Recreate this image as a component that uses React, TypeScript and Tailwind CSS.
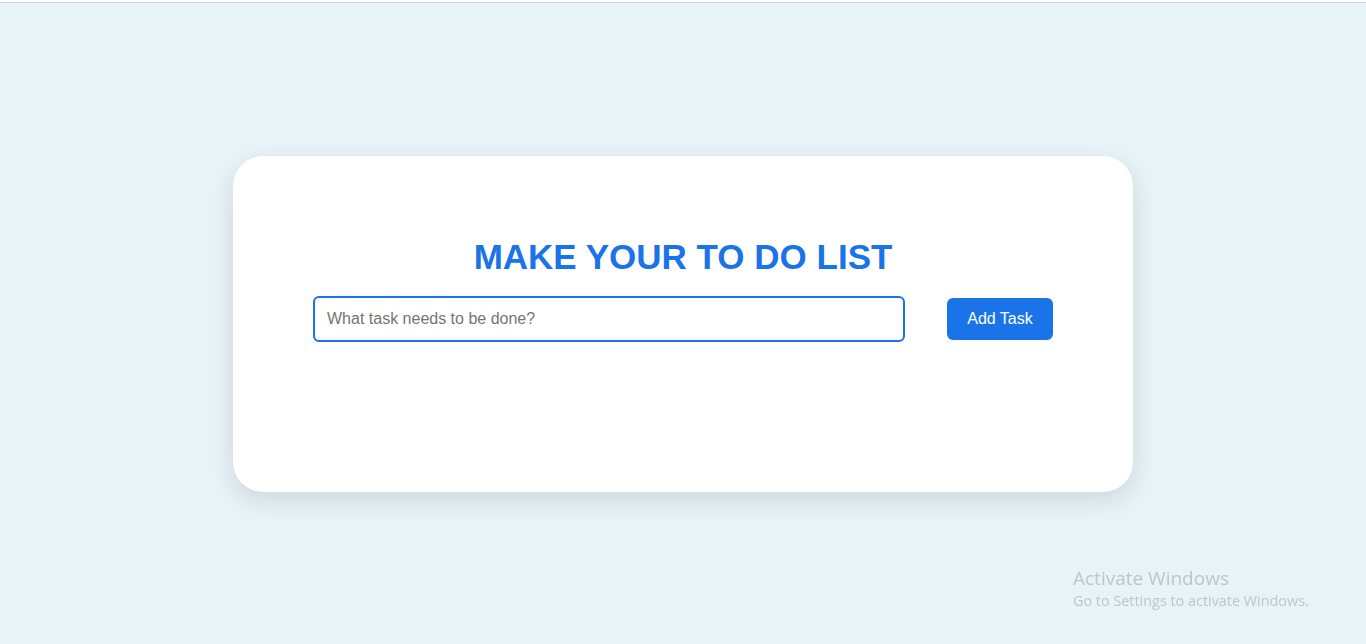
export default function App() {
  return (
    <div className="min-h-screen bg-[#e8f3f8] flex flex-col font-['Liberation_Sans',Arial,sans-serif]">
      <div className="h-[2px] bg-white"></div>
      <div className="h-px bg-[#d2d2d2]"></div>
      <div className="flex-1 flex items-center justify-center">
        <div className="w-[900px] h-[336px] bg-white rounded-[30px] shadow-[0_8px_24px_rgba(0,0,0,0.12)] px-20 pt-[80px] flex flex-col">
          <h1 className="text-center text-[35px] leading-[41px] font-bold text-[#1a73e8]">
            MAKE YOUR TO DO LIST
          </h1>
          <div className="mt-[19px] flex items-center gap-[42px]">
            <input
              type="text"
              placeholder="What task needs to be done?"
              className="w-[592px] h-[46px] border-2 border-[#1a73e8] rounded-md px-3 text-base text-gray-800 placeholder:text-[#757575] outline-none"
            />
            <button className="w-[106px] h-[42px] bg-[#1a73e8] text-white text-base rounded-md">
              Add Task
            </button>
          </div>
        </div>
      </div>
      <div className="fixed left-[1073px] top-[566px] text-[#c0c4c7] font-['Open_Sans','Noto_Sans',sans-serif] pointer-events-none">
        <div className="text-[19px] leading-[24px]">Activate Windows</div>
        <div className="text-[14.4px] leading-[21px]">Go to Settings to activate Windows.</div>
      </div>
    </div>
  );
}
